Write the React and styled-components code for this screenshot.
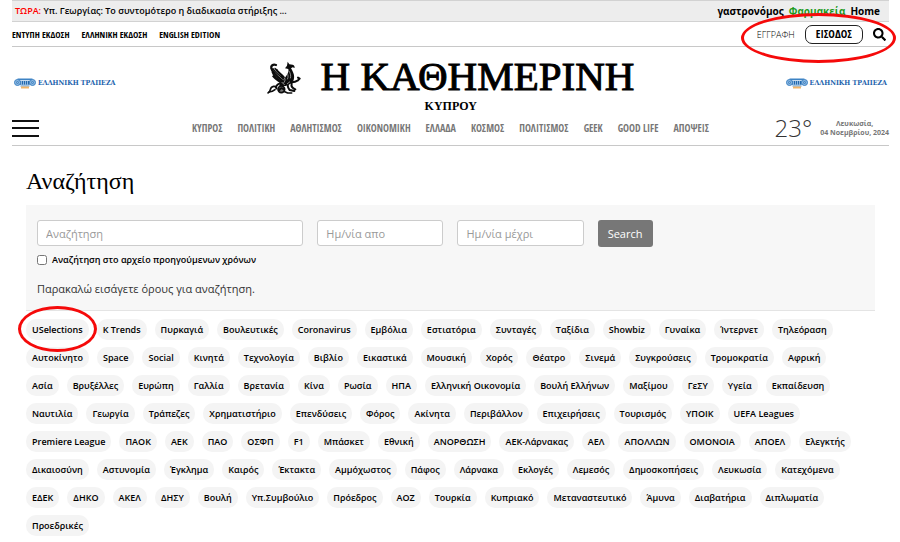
import styled, { createGlobalStyle } from 'styled-components'
import { FaSearch } from 'react-icons/fa'

const GlobalStyle = createGlobalStyle`
    * {
        box-sizing: border-box;
    }
    body {
        margin: 0;
        background-color: #ffffff;
        color: #000000;
        font-family: "Open Sans", "Noto Sans", sans-serif;
    }
    a {
        color: inherit;
        text-decoration: none;
    }
`

const narrow = '"Open Sans Condensed", "Noto Sans Condensed", "Liberation Sans Narrow", "Open Sans", sans-serif'

/* WRAPPERS */
const Page = styled.div`
    padding: 0 11px 6px 12px;
    overflow: hidden;
`
const NewsBar = styled.div`
    display: flex;
    align-items: center;
    justify-content: space-between;
    height: 22px;
    padding: 0 9px 0 3px;
    background-color: #ededed;
    border-top: 1px solid #d2d2d2;
    border-bottom: 1px solid #d2d2d2;
`
const Ticker = styled.a`
    font-size: 9px;
    font-weight: 600;
    line-height: 20px;
`
const TickerLabel = styled.span`
    color: #ff0000;
`
const SisterSites = styled.div`
    display: flex;
    gap: 5px;
    font-size: 10px;
    font-weight: 700;
    line-height: 20px;
`
const SisterLink = styled.a`
    color: ${(p) => (p.$green ? '#1a9a1a' : '#000000')};
`
const UtilityBar = styled.div`
    display: flex;
    align-items: center;
    justify-content: space-between;
    height: 25px;
    border-bottom: 1px solid #c8c8c8;
`
const Editions = styled.div`
    display: flex;
    gap: 12px;
    font-family: ${narrow};
    font-size: 9px;
    font-weight: 700;
`
const Account = styled.div`
    position: relative;
    display: flex;
    align-items: center;
    gap: 10px;
    padding-right: 3px;
`
const RegisterLink = styled.a`
    color: #000000;
    font-size: 9px;
    font-weight: 300;
`
const LoginButton = styled.button`
    height: 19px;
    padding: 0 10px;
    background-color: #ffffff;
    border: 1px solid #222222;
    border-radius: 7px;
    font-family: ${narrow};
    font-size: 11px;
    font-weight: 700;
    line-height: 16px;
`
const IconButton = styled.button`
    display: flex;
    padding: 0;
    background: none;
    border: 0;
    font-size: 13px;
`
const Ring = styled.span`
    position: absolute;
    z-index: 1;
    top: ${(p) => p.$top}px;
    right: ${(p) => p.$right}px;
    bottom: ${(p) => p.$bottom}px;
    left: ${(p) => p.$left}px;
    border: 3px solid #f50a0a;
    border-radius: 50%;
    pointer-events: none;
`

/* HEADER */
const Masthead = styled.header`
    display: grid;
    grid-template-columns: 1fr auto 1fr;
    align-items: center;
    height: 64px;
    padding: 6px 2px 0;
`
const BankLink = styled.a`
    display: flex;
    align-items: center;
    gap: 2px;
    justify-self: ${(p) => p.$side};
    color: #1d63ad;
    font-family: "DejaVu Serif Condensed", "DejaVu Serif", serif;
    font-size: 7px;
    font-weight: 700;
    line-height: 12px;
`
const Brand = styled.a`
    display: flex;
    align-items: flex-start;
    gap: 20px;
`
const BrandMark = styled.svg`
    width: 34px;
    height: 34px;
    margin-top: 8px;
`
const BrandText = styled.span`
    display: flex;
    flex-direction: column;
    font-family: "Liberation Serif", serif;
`
const BrandName = styled.span`
    font-size: 41px;
    line-height: 47px;
    -webkit-text-stroke: 1px #000000;
`
const BrandCountry = styled.span`
    padding-left: 104px;
    font-size: 12px;
    font-weight: 700;
    line-height: 13px;
`
const NavBar = styled.div`
    display: grid;
    grid-template-columns: 1fr auto 1fr;
    align-items: center;
    height: 35px;
    border-bottom: 1px solid #c8c8c8;
`
const MenuButton = styled.button`
    display: flex;
    flex-direction: column;
    justify-content: space-between;
    width: 27px;
    height: 17px;
    padding: 0;
    background: none;
    border: 0;
`
const MenuLine = styled.span`
    width: 100%;
    height: 2px;
    background-color: #111111;
`
const Nav = styled.nav`
    display: flex;
    gap: 15px;
    color: #777777;
    font-family: ${narrow};
    font-size: 10px;
    font-weight: 700;
`
const Weather = styled.div`
    display: flex;
    align-items: center;
    gap: 8px;
    justify-self: end;
`
const Degrees = styled.span`
    color: #333333;
    font-size: 24px;
    font-weight: 300;
    line-height: 28px;
`
const Place = styled.span`
    color: #777777;
    font-size: 7px;
    font-weight: 700;
    line-height: 9px;
    text-align: center;
`

/* SEARCH */
const Main = styled.main`
    padding: 0 14px;
`
const Title = styled.h1`
    margin: 22px 0 11px;
    font-family: "Liberation Serif", serif;
    font-size: 24px;
    font-weight: 400;
    line-height: 26px;
`
const Panel = styled.form`
    padding: 15px 11px 13px;
    background-color: #f7f7f7;
    border-bottom: 1px solid #e4e4e4;
`
const Fields = styled.div`
    display: grid;
    grid-template-columns: repeat(12, minmax(0, 1fr));
    gap: 14px;
`
const Field = styled.input`
    grid-column: span ${(p) => p.$span};
    width: 100%;
    height: 26px;
    padding: 0 8px;
    background-color: #ffffff;
    border: 1px solid #cccccc;
    border-radius: 3px;
    font-family: inherit;
    font-size: 11px;

    &::placeholder {
        color: #999999;
    }
`
const SubmitButton = styled.button`
    grid-column: span 2;
    justify-self: start;
    height: 27px;
    padding: 0 10px;
    background-color: #777777;
    border: 0;
    border-radius: 3px;
    color: #ffffff;
    font-family: inherit;
    font-size: 11px;
`
const ArchiveLabel = styled.label`
    display: flex;
    align-items: center;
    gap: 5px;
    margin-top: 7px;
    font-size: 9px;
    font-weight: 600;
    line-height: 12px;
`
const Checkbox = styled.input`
    width: 10px;
    height: 10px;
    margin: 0;
`
const Message = styled.p`
    margin: 15px 0 0;
    color: #333333;
    font-size: 11px;
    line-height: 16px;
`
const Tags = styled.ul`
    display: flex;
    flex-wrap: wrap;
    gap: 7px 0;
    margin: 8px 0 0;
    padding: 0 8px 0 0;
    list-style: none;
`
/* the trailing margin counts when a row wraps */
const Tag = styled.li`
    position: relative;
    margin-right: 8px;
    padding: 0 6px;
    background-color: #f4f4f4;
    border-radius: 10px;
    font-size: 9px;
    font-weight: 600;
    line-height: 21px;
`

const editions = ['ΕΝΤΥΠΗ ΕΚΔΟΣΗ', 'ΕΛΛΗΝΙΚΗ ΕΚΔΟΣΗ', 'ENGLISH EDITION']
const sections = ['ΚΥΠΡΟΣ', 'ΠΟΛΙΤΙΚΗ', 'ΑΘΛΗΤΙΣΜΟΣ', 'ΟΙΚΟΝΟΜΙΚΗ', 'ΕΛΛΑΔΑ', 'ΚΟΣΜΟΣ', 'ΠΟΛΙΤΙΣΜΟΣ', 'GEEK', 'GOOD LIFE', 'ΑΠΟΨΕΙΣ']
const tags = [
    'USelections', 'K Trends', 'Πυρκαγιά', 'Βουλευτικές', 'Coronavirus', 'Εμβόλια', 'Εστιατόρια', 'Συνταγές', 'Ταξίδια', 'Showbiz', 'Γυναίκα', 'Ίντερνετ', 'Τηλεόραση',
    'Αυτοκίνητο', 'Space', 'Social', 'Κινητά', 'Τεχνολογία', 'Βιβλίο', 'Εικαστικά', 'Μουσική', 'Χορός', 'Θέατρο', 'Σινεμά', 'Συγκρούσεις', 'Τρομοκρατία', 'Αφρική',
    'Ασία', 'Βρυξέλλες', 'Ευρώπη', 'Γαλλία', 'Βρετανία', 'Κίνα', 'Ρωσία', 'ΗΠΑ', 'Ελληνική Οικονομία', 'Βουλή Ελλήνων', 'Μαξίμου', 'ΓεΣΥ', 'Υγεία', 'Εκπαίδευση',
    'Ναυτιλία', 'Γεωργία', 'Τράπεζες', 'Χρηματιστήριο', 'Επενδύσεις', 'Φόρος', 'Ακίνητα', 'Περιβάλλον', 'Επιχειρήσεις', 'Τουρισμός', 'ΥΠΟΙΚ', 'UEFA Leagues',
    'Premiere League', 'ΠΑΟΚ', 'ΑΕΚ', 'ΠΑΟ', 'ΟΣΦΠ', 'F1', 'Μπάσκετ', 'Εθνική', 'ΑΝΟΡΘΩΣΗ', 'ΑΕΚ-Λάρνακας', 'ΑΕΛ', 'ΑΠΟΛΛΩΝ', 'ΟΜΟΝΟΙΑ', 'ΑΠΟΕΛ', 'Ελεγκτής',
    'Δικαιοσύνη', 'Αστυνομία', 'Έγκλημα', 'Καιρός', 'Έκτακτα', 'Αμμόχωστος', 'Πάφος', 'Λάρνακα', 'Εκλογές', 'Λεμεσός', 'Δημοσκοπήσεις', 'Λευκωσία', 'Κατεχόμενα',
    'ΕΔΕΚ', 'ΔΗΚΟ', 'ΑΚΕΛ', 'ΔΗΣΥ', 'Βουλή', 'Υπ.Συμβούλιο', 'Πρόεδρος', 'ΑΟΖ', 'Τουρκία', 'Κυπριακό', 'Μεταναστευτικό', 'Άμυνα', 'Διαβατήρια', 'Διπλωματία',
    'Προεδρικές',
]

/* DRAWINGS */
const Griffin = () => (
    <BrandMark viewBox="24 20 102 102" aria-hidden="true">
        <g fill="none" stroke="#0c0c0c" strokeLinecap="round" strokeLinejoin="round">
            <path d="M27 116c4-2 6-5 7-10s4-9 10-10 9 3 8 7" strokeWidth="5" />
            <path d="M30 113c8-1 13-3 18-7" strokeWidth="5" />
            <path d="M51 32c-9-3-16 2-14 10 4 15 20 27 33 37" strokeWidth="7" />
            <path d="M42 43c6 12 20 20 31 31M48 42c4 11 18 16 27 30M53 45c4 9 16 14 23 24" strokeWidth="4" />
            <path d="M40 53c4 12 16 22 28 29M42 66c6 8 14 12 22 18" strokeWidth="5" />
            <circle cx="67" cy="105" r="10" fill="#777777" strokeWidth="5" />
            <path d="M50 99c4-10 14-13 23-12M61 107c3-6 8-7 12-3" strokeWidth="6" />
            <path d="M88 78c4 7 16 8 29 0l5-5-5-3" strokeWidth="6" />
            <path d="M89 83c-5 9-3 17 3 24l14 3M98 88c-2 7 1 13 11 17" strokeWidth="6" />
            <path d="M74 111l12 5h12" strokeWidth="5" />
        </g>
        <path d="M84 34l2-12 5 8 10 1c5 2 6 5 6 10l-6-2-5 3c8 13 12 24 8 35-4 12-15 14-24 18l-19 1c0-9 9-13 13-20 6-10 16-18 14-32l-10-2z" fill="#0c0c0c" />
        <path d="M89 49c6 8 7 16 5 23M84 56c4 6 4 12 1 19M76 70c4 5 2 11-3 17M68 83l9 9M93 82l-9 7" fill="none" stroke="#c8c8c8" strokeWidth="2" />
    </BrandMark>
)

const Column = () => (
    <svg width="22" height="11" viewBox="0 0 44 22" aria-hidden="true">
        <path d="M7 1h30v3H7z" fill="#3d83c4" />
        <path d="M10 5h24v9H10z" fill="#8cb6de" />
        <path d="M13 6v7M17 6v7M21 6v7M25 6v7M29 6v7M32 6v7" stroke="#2368ad" strokeWidth="2" />
        <g fill="#8cb6de" stroke="#3d83c4" strokeWidth="2">
            <circle cx="7" cy="9" r="6" />
            <circle cx="7" cy="9" r="2" />
            <circle cx="37" cy="9" r="6" />
            <circle cx="37" cy="9" r="2" />
        </g>
        <path d="M13 15h18v2H13z" fill="#3d83c4" />
        <path d="M14 17h16v4H14z" fill="#f0b468" />
    </svg>
)

const Bank = ({ side }) => (
    <BankLink href="#" $side={side}>
        <Column />
        ΕΛΛΗΝΙΚΗ ΤΡΑΠΕΖΑ
    </BankLink>
)

const App = () => {
    return (
        <Page>
            <GlobalStyle />

            <NewsBar>
                <Ticker href="#"><TickerLabel>ΤΩΡΑ:</TickerLabel> Υπ. Γεωργίας: Το συντομότερο η διαδικασία στήριξης ...</Ticker>
                <SisterSites>
                    <SisterLink href="#">γαστρονόμος</SisterLink>
                    <SisterLink href="#" $green>Φαρμακεία</SisterLink>
                    <SisterLink href="#">Home</SisterLink>
                </SisterSites>
            </NewsBar>

            <UtilityBar>
                <Editions>
                    {editions.map((x) => <a href="#" key={x}>{x}</a>)}
                </Editions>
                <Account>
                    <RegisterLink href="#">ΕΓΓΡΑΦΗ</RegisterLink>
                    <LoginButton type="button">ΕΙΣΟΔΟΣ</LoginButton>
                    <IconButton type="button" aria-label="Αναζήτηση"><FaSearch /></IconButton>
                    <Ring $top={-12} $right={-7} $bottom={-19} $left={-16} />
                </Account>
            </UtilityBar>

            <Masthead>
                <Bank side="start" />
                <Brand href="#">
                    <Griffin />
                    <BrandText>
                        <BrandName>Η ΚΑΘΗΜΕΡΙΝΗ</BrandName>
                        <BrandCountry>ΚΥΠΡΟΥ</BrandCountry>
                    </BrandText>
                </Brand>
                <Bank side="end" />
            </Masthead>

            <NavBar>
                <MenuButton type="button" aria-label="Μενού">
                    <MenuLine />
                    <MenuLine />
                    <MenuLine />
                </MenuButton>
                <Nav>
                    {sections.map((x) => <a href="#" key={x}>{x}</a>)}
                </Nav>
                <Weather>
                    <Degrees>23°</Degrees>
                    <Place>Λευκωσία,<br />04 Νοεμβρίου, 2024</Place>
                </Weather>
            </NavBar>

            <Main>
                <Title>Αναζήτηση</Title>
                <Panel onSubmit={(e) => e.preventDefault()}>
                    <Fields>
                        <Field $span={4} type="text" aria-label="Αναζήτηση" placeholder="Αναζήτηση" />
                        <Field $span={2} type="text" aria-label="Ημ/νία απο" placeholder="Ημ/νία απο" />
                        <Field $span={2} type="text" aria-label="Ημ/νία μέχρι" placeholder="Ημ/νία μέχρι" />
                        <SubmitButton type="submit">Search</SubmitButton>
                    </Fields>
                    <ArchiveLabel>
                        <Checkbox type="checkbox" />
                        Αναζήτηση στο αρχείο προηγούμενων χρόνων
                    </ArchiveLabel>
                    <Message>Παρακαλώ εισάγετε όρους για αναζήτηση.</Message>
                </Panel>

                <Tags>
                    {tags.map((x, i) => (
                        <Tag key={x}>
                            <a href="#">{x}</a>
                            {i === 0 && <Ring $top={-13} $right={-8} $bottom={-12} $left={-8} />}
                        </Tag>
                    ))}
                </Tags>
            </Main>
        </Page>
    )
}

export default App
